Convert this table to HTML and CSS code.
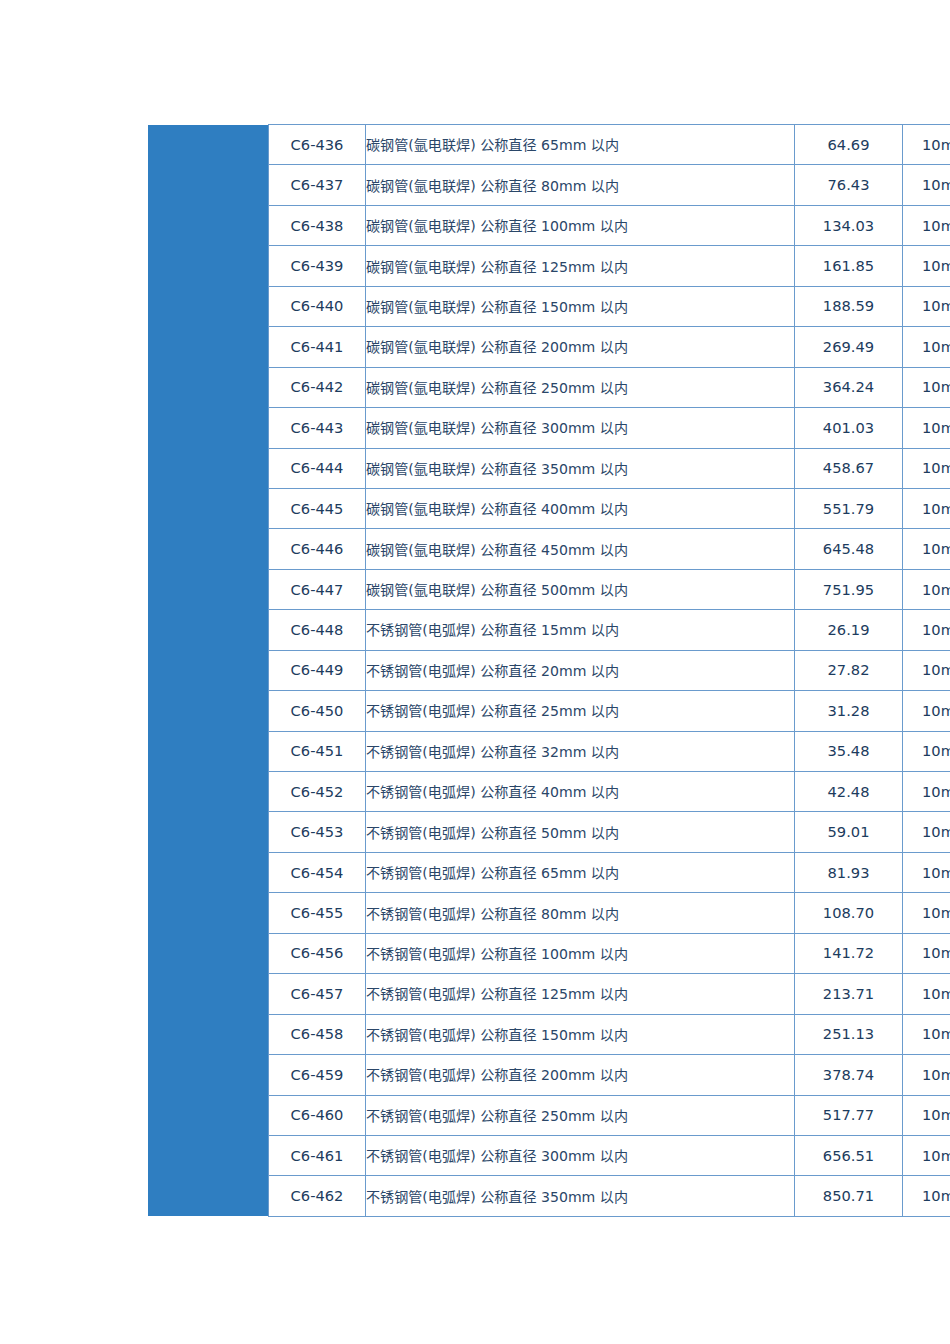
FILE: index.html
```html
<!DOCTYPE html>
<html lang="zh-CN">
<head>
<meta charset="utf-8">
<title>定额表</title>
<link rel="stylesheet" href="styles.css">
</head>
<body>
<div class="sheet">
  <div class="band"></div>
  <div class="rows">
    <div class="row"><div class="c code">C6-436</div><div class="c desc">碳钢管(氩电联焊) 公称直径 65mm 以内</div><div class="c num">64.69</div><div class="c unit">10m</div></div>
    <div class="row"><div class="c code">C6-437</div><div class="c desc">碳钢管(氩电联焊) 公称直径 80mm 以内</div><div class="c num">76.43</div><div class="c unit">10m</div></div>
    <div class="row"><div class="c code">C6-438</div><div class="c desc">碳钢管(氩电联焊) 公称直径 100mm 以内</div><div class="c num">134.03</div><div class="c unit">10m</div></div>
    <div class="row"><div class="c code">C6-439</div><div class="c desc">碳钢管(氩电联焊) 公称直径 125mm 以内</div><div class="c num">161.85</div><div class="c unit">10m</div></div>
    <div class="row"><div class="c code">C6-440</div><div class="c desc">碳钢管(氩电联焊) 公称直径 150mm 以内</div><div class="c num">188.59</div><div class="c unit">10m</div></div>
    <div class="row"><div class="c code">C6-441</div><div class="c desc">碳钢管(氩电联焊) 公称直径 200mm 以内</div><div class="c num">269.49</div><div class="c unit">10m</div></div>
    <div class="row"><div class="c code">C6-442</div><div class="c desc">碳钢管(氩电联焊) 公称直径 250mm 以内</div><div class="c num">364.24</div><div class="c unit">10m</div></div>
    <div class="row"><div class="c code">C6-443</div><div class="c desc">碳钢管(氩电联焊) 公称直径 300mm 以内</div><div class="c num">401.03</div><div class="c unit">10m</div></div>
    <div class="row"><div class="c code">C6-444</div><div class="c desc">碳钢管(氩电联焊) 公称直径 350mm 以内</div><div class="c num">458.67</div><div class="c unit">10m</div></div>
    <div class="row"><div class="c code">C6-445</div><div class="c desc">碳钢管(氩电联焊) 公称直径 400mm 以内</div><div class="c num">551.79</div><div class="c unit">10m</div></div>
    <div class="row"><div class="c code">C6-446</div><div class="c desc">碳钢管(氩电联焊) 公称直径 450mm 以内</div><div class="c num">645.48</div><div class="c unit">10m</div></div>
    <div class="row"><div class="c code">C6-447</div><div class="c desc">碳钢管(氩电联焊) 公称直径 500mm 以内</div><div class="c num">751.95</div><div class="c unit">10m</div></div>
    <div class="row"><div class="c code">C6-448</div><div class="c desc">不锈钢管(电弧焊) 公称直径 15mm 以内</div><div class="c num">26.19</div><div class="c unit">10m</div></div>
    <div class="row"><div class="c code">C6-449</div><div class="c desc">不锈钢管(电弧焊) 公称直径 20mm 以内</div><div class="c num">27.82</div><div class="c unit">10m</div></div>
    <div class="row"><div class="c code">C6-450</div><div class="c desc">不锈钢管(电弧焊) 公称直径 25mm 以内</div><div class="c num">31.28</div><div class="c unit">10m</div></div>
    <div class="row"><div class="c code">C6-451</div><div class="c desc">不锈钢管(电弧焊) 公称直径 32mm 以内</div><div class="c num">35.48</div><div class="c unit">10m</div></div>
    <div class="row"><div class="c code">C6-452</div><div class="c desc">不锈钢管(电弧焊) 公称直径 40mm 以内</div><div class="c num">42.48</div><div class="c unit">10m</div></div>
    <div class="row"><div class="c code">C6-453</div><div class="c desc">不锈钢管(电弧焊) 公称直径 50mm 以内</div><div class="c num">59.01</div><div class="c unit">10m</div></div>
    <div class="row"><div class="c code">C6-454</div><div class="c desc">不锈钢管(电弧焊) 公称直径 65mm 以内</div><div class="c num">81.93</div><div class="c unit">10m</div></div>
    <div class="row"><div class="c code">C6-455</div><div class="c desc">不锈钢管(电弧焊) 公称直径 80mm 以内</div><div class="c num">108.70</div><div class="c unit">10m</div></div>
    <div class="row"><div class="c code">C6-456</div><div class="c desc">不锈钢管(电弧焊) 公称直径 100mm 以内</div><div class="c num">141.72</div><div class="c unit">10m</div></div>
    <div class="row"><div class="c code">C6-457</div><div class="c desc">不锈钢管(电弧焊) 公称直径 125mm 以内</div><div class="c num">213.71</div><div class="c unit">10m</div></div>
    <div class="row"><div class="c code">C6-458</div><div class="c desc">不锈钢管(电弧焊) 公称直径 150mm 以内</div><div class="c num">251.13</div><div class="c unit">10m</div></div>
    <div class="row"><div class="c code">C6-459</div><div class="c desc">不锈钢管(电弧焊) 公称直径 200mm 以内</div><div class="c num">378.74</div><div class="c unit">10m</div></div>
    <div class="row"><div class="c code">C6-460</div><div class="c desc">不锈钢管(电弧焊) 公称直径 250mm 以内</div><div class="c num">517.77</div><div class="c unit">10m</div></div>
    <div class="row"><div class="c code">C6-461</div><div class="c desc">不锈钢管(电弧焊) 公称直径 300mm 以内</div><div class="c num">656.51</div><div class="c unit">10m</div></div>
    <div class="row"><div class="c code">C6-462</div><div class="c desc">不锈钢管(电弧焊) 公称直径 350mm 以内</div><div class="c num">850.71</div><div class="c unit">10m</div></div>
  </div>
</div>
</body>
</html>
```

FILE: styles.css
```css
html, body {
  margin: 0;
  padding: 0;
  background: #ffffff;
  overflow: hidden;
}

body {
  width: 950px;
  height: 1344px;
  font-family: "DejaVu Sans", "Noto Sans CJK SC", sans-serif;
  font-size: 14.67px;
  color: #1d3c5e;
}

.sheet {
  display: flex;
  margin-top: 124px;
  margin-left: 148px;
  width: 1000px;
}

.band {
  width: 120px;
  flex: none;
  margin-top: 1px;
  margin-bottom: 1px;
  background: #2f7ec1;
}

.rows {
  flex: none;
  display: flex;
  flex-direction: column;
  border-top: 1px solid #6a9bcd;
  border-left: 1px solid #6a9bcd;
}

.row {
  display: grid;
  grid-template-columns: 97px 429px 108px 72px;
  height: 40.45px;
  box-sizing: border-box;
  border-bottom: 1px solid #6a9bcd;
}

.c {
  display: flex;
  align-items: center;
  border-right: 1px solid #6a9bcd;
  white-space: nowrap;
  overflow: hidden;
  padding-bottom: 1px;
}

.code, .num, .unit {
  justify-content: center;
}

.desc {
  justify-content: flex-start;
  padding-left: 0;
  font-size: 14.1px;
  color: #2a4668;
}
```
